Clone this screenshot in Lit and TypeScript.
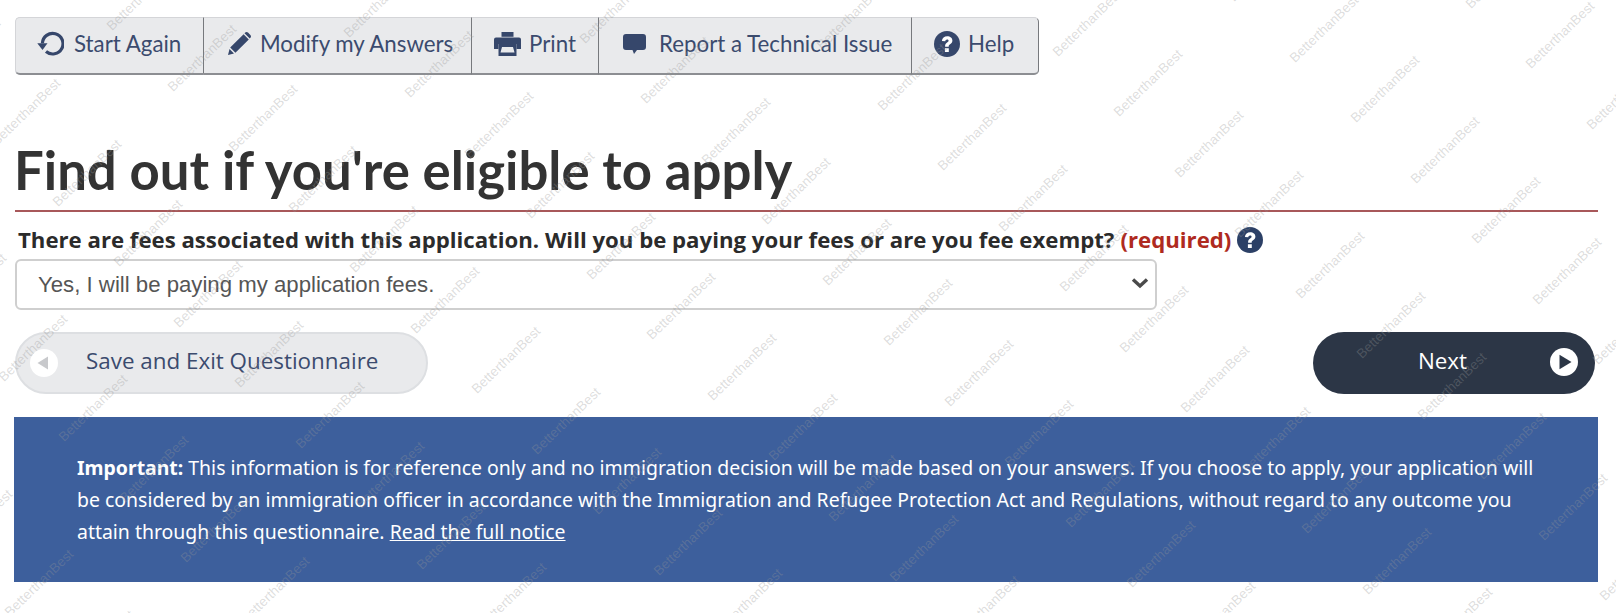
import { LitElement, html, css, svg } from "lit";
import { customElement } from "lit/decorators.js";

const marks: { x: number; y: number }[] = [];
for (let i = -8; i < 10; i++) {
  for (let j = -8; j < 16; j++) {
    const x = 1148 + i * 236.5 + j * 60.7;
    const y = 83 + i * 6.3 + j * 60.5;
    if (x > -80 && x < 1700 && y > -80 && y < 690) marks.push({ x, y });
  }
}

const question = svg`<circle cx="13" cy="13" r="13" fill="currentColor"/><path d="M7.900 10c.2-3 2.500-4.800 5.300-4.800 3 0 5.200 1.800 5.200 4.400 0 1.800-.9 2.800-2.300 3.700-1.100.7-1.400 1.100-1.400 2v.5h-3.600v-.8c0-1.800.7-2.700 2-3.600 1-.7 1.500-1.100 1.500-1.700 0-.7-.7-1.200-1.500-1.200-1 0-1.700.7-1.800 1.800zM10.900 17.300h3.900v3.600h-3.900z" fill="#fff"/>`;

@customElement("app-root")
export class AppRoot extends LitElement {
  static styles = css`
    :host { display: block; position: relative; height: 613px; overflow: hidden; background: #fff; font-family: "Open Sans", sans-serif; color: #333; }
    .page { padding: 17px 18px 0 15px; }
    .bar { display: inline-flex; height: 58px; background: #e9eaec; border-radius: 5px; box-sizing: border-box; }
    .btn { display: flex; align-items: center; box-sizing: border-box; height: 58px; padding-bottom: 4px; background: #e9eaec; border-top: 1px solid #d4d5d8; border-right: 1px solid #77797d; border-bottom: 2px solid #8c8e92; font: 400 22.3px "Lato", sans-serif; color: #3b4b6e; white-space: nowrap; }
    .btn:first-child { border-left: 1px solid #d4d5d8; border-radius: 5px 0 0 5px; }
    .btn:last-child { border-radius: 0 5px 5px 0; }
    .btn svg { flex: none; fill: #36476b; color: #36476b; }
    .b1 { width: 189px; padding-left: 21px; gap: 10px; }
    .b2 { width: 268px; padding-left: 24px; gap: 9px; }
    .b3 { width: 127px; padding-left: 22px; gap: 8px; }
    .b4 { width: 313px; padding-left: 24px; gap: 13px; }
    .b5 { width: 127px; padding-left: 22px; gap: 8px; }
    h1 { margin: 57px 0 0 -1px; font: 700 52.7px/75px "Lato", sans-serif; color: #333; height: 64px; }
    .rule { height: 2px; background: #a8585a; margin-top: 14px; }
    .label { display: flex; align-items: center; box-sizing: border-box; height: 47px; padding-top: 8px; margin-left: 3px; font: 700 22.2px "Open Sans", sans-serif; color: #2b2b2b; white-space: nowrap; }
    .req { color: #af2a20; margin-left: 6px; }
    .label svg { margin-left: 6px; color: #2c4066; flex: none; }
    .select { position: relative; width: 1142px; height: 51px; }
    select { appearance: none; box-sizing: border-box; width: 100%; height: 100%; background: transparent; border: 2px solid #cfcfcf; border-radius: 6px; padding: 0 21px; font: 22.2px "Liberation Sans", Arial, sans-serif; color: #555; }
    .chev { position: absolute; right: 8px; top: 18px; pointer-events: none; }
    .actions { display: flex; justify-content: space-between; margin: 22px 3px 0 0; }
    .pill { position: relative; display: flex; align-items: center; box-sizing: border-box; height: 62px; padding-bottom: 5px; border-radius: 31px; font: 400 22.4px "Open Sans", sans-serif; }
    .back { width: 413px; padding-left: 69px; background: #e9eaec; border: 2px solid #dddfe2; color: #3b4b6e; }
    .next { width: 282px; justify-content: center; padding-right: 23px; background: #2c3646; color: #fff; }
    .pill svg { position: absolute; top: 16px; }
    .back svg { left: 13px; top: 15px; }
    .next svg { right: 17px; }
    .notice { box-sizing: border-box; height: 165px; margin: 23px 0 0 -1px; padding: 35px 50px 0 63px; background: #3d5f9c; color: #fff; font: 400 19.45px/32px "Noto Sans", sans-serif; }
    .notice b { font-weight: 700; }
    .notice a { color: #fff; text-decoration: underline; }
    .marks { position: absolute; inset: 0; pointer-events: none; overflow: hidden; }
    .mark { position: absolute; transform: translate(-50%, -50%) rotate(-44deg); font: 400 13.5px "Liberation Sans", Arial, sans-serif; color: rgba(150, 150, 150, 0.32); white-space: nowrap; }
  `;

  render() {
    return html`
      <div class="page">
        <div class="bar">
          <div class="btn b1">
            <svg width="27" height="26" viewBox="0 0 27 26"><path d="M5.400 12.200A10.300 10.300 0 1 1 9 20.500" fill="none" stroke="#36476b" stroke-width="3.200"/><path d="M.3 12.200H10.500L5.500 19z"/></svg>
            <span>Start Again</span>
          </div>
          <div class="btn b2">
            <svg width="23" height="23" viewBox="0 0 23 23"><path d="M15.600 2.200 20.800 7.400 7.400 20.800 2.200 15.600zM17.200.6c.8-.8 2-.8 2.800 0l2.400 2.400c.8.8.8 2 0 2.800l-.7.7-5.200-5.200zM1.500 17l4.500 4.500-6 1.500z"/></svg>
            <span>Modify my Answers</span>
          </div>
          <div class="btn b3">
            <svg width="27" height="24" viewBox="0 0 27 24"><path d="M7.500 0h12v4.800h-12z"/><path d="M2 5.500h23a2 2 0 0 1 2 2V17h-4.500v-5h-18v5H0V7.500a2 2 0 0 1 2-2z"/><path fill-rule="evenodd" d="M4.500 12h18v12h-18zM8 15l-1.500 5.500h14L19 15z"/></svg>
            <span>Print</span>
          </div>
          <div class="btn b4">
            <svg width="23" height="20" viewBox="0 0 23 20"><path d="M3 0h17a3 3 0 0 1 3 3v10a3 3 0 0 1-3 3h-6l-3 4-1.500-4H3a3 3 0 0 1-3-3V3a3 3 0 0 1 3-3z"/></svg>
            <span>Report a Technical Issue</span>
          </div>
          <div class="btn b5">
            <svg width="26" height="26" viewBox="0 0 26 26">${question}</svg>
            <span>Help</span>
          </div>
        </div>
        <h1>Find out if you're eligible to apply</h1>
        <div class="rule"></div>
        <div class="label">
          <span>There are fees associated with this application. Will you be paying your fees or are you fee exempt?</span>
          <span class="req">(required)</span>
          <svg width="26" height="26" viewBox="0 0 26 26">${question}</svg>
        </div>
        <div class="select">
          <select><option>Yes, I will be paying my application fees.</option></select>
          <svg class="chev" width="18" height="12" viewBox="0 0 18 12"><path d="M2 2.500 9 9l7-6.500" fill="none" stroke="#4a4a4a" stroke-width="3.400"/></svg>
        </div>
        <div class="actions">
          <div class="pill back">
            <svg width="28" height="28" viewBox="0 0 28 28"><circle cx="14" cy="14" r="14" fill="#fff"/><path d="M7.500 14 18 7.500v13z" fill="#c8c9cc"/></svg>
            <span>Save and Exit Questionnaire</span>
          </div>
          <div class="pill next">
            <span>Next</span>
            <svg width="28" height="28" viewBox="0 0 28 28"><circle cx="14" cy="14" r="14" fill="#fff"/><path d="M21.500 14 9.500 6.800v14.400z" fill="#2c3646"/></svg>
          </div>
        </div>
        <div class="notice">
          <b>Important:</b> This information is for reference only and no immigration decision will be made based on your answers. If you choose to apply, your application will be considered by an immigration officer in accordance with the Immigration and Refugee Protection Act and Regulations, without regard to any outcome you attain through this questionnaire. <a href="#">Read the full notice</a>
        </div>
      </div>
      <div class="marks">
        ${marks.map((m) => html`<span class="mark" style="left:${m.x}px;top:${m.y}px">BetterthanBest</span>`)}
      </div>
    `;
  }
}
